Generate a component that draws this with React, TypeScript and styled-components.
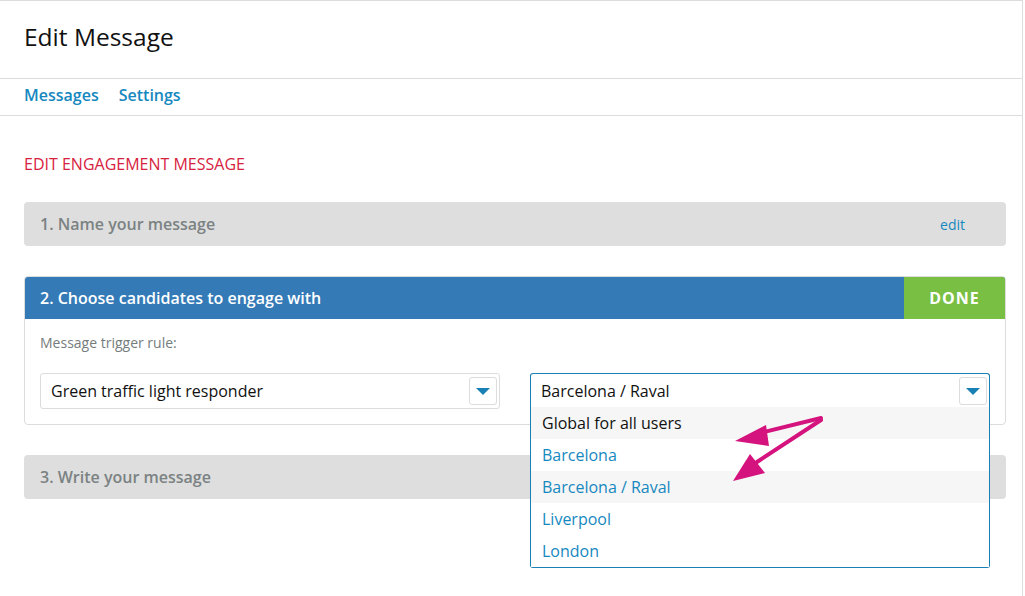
import React from 'react'
import styled, { createGlobalStyle } from 'styled-components'

const GlobalStyle = createGlobalStyle`
  * { box-sizing: border-box; }
  body { margin: 0; font-family: "Open Sans", "Noto Sans", Arial, sans-serif; background: #fff; color: #111; }
`

const Page = styled.div`
  position: relative;
  width: 1023px;
  min-height: 596px;
  border-top: 1px solid #dcdcdc;
  border-right: 1px solid #dcdcdc;
`

const Header = styled.header`
  height: 78px;
  display: flex;
  align-items: center;
  padding: 0 24px;
  border-bottom: 1px solid #dcdcdc;
`

const Title = styled.h1`
  margin: 0 0 7px;
  font-size: 24.5px;
  font-weight: 500;
  color: #111;
`

const Nav = styled.nav`
  height: 37px;
  display: flex;
  align-items: center;
  gap: 20px;
  padding: 0 24px 4px;
  border-bottom: 1px solid #dcdcdc;
`

const NavLink = styled.a`
  font-size: 16px;
  font-weight: 600;
  color: #1688c0;
  text-decoration: none;
`

const Content = styled.main`
  padding: 37px 16px 0 24px;
`

const SectionTitle = styled.h2`
  margin: 0 0 27px;
  font-size: 16px;
  font-weight: 400;
  color: #d7223e;
  line-height: 22px;
`

const Collapsed = styled.div`
  height: 44px;
  display: flex;
  align-items: center;
  justify-content: space-between;
  padding: 0 41px 0 16px;
  background: #dedede;
  border-radius: 4px;
  margin-bottom: 30px;
`

const StepLabel = styled.span`
  font-size: 16px;
  font-weight: 600;
  color: #7b8283;
`

const EditLink = styled.a`
  font-size: 14px;
  color: #1688c0;
  text-decoration: none;
`

const Panel = styled.section`
  border: 1px solid #dcdcdc;
  border-radius: 4px;
  margin-bottom: 30px;
`

const PanelHead = styled.div`
  height: 42px;
  display: flex;
  align-items: stretch;
  background: #337ab7;
  border-radius: 3px 3px 0 0;
`

const PanelTitle = styled.div`
  flex: 1;
  display: flex;
  align-items: center;
  padding-left: 15px;
  font-size: 16px;
  font-weight: 600;
  color: #fff;
`

const DoneButton = styled.button`
  width: 101px;
  border: 0;
  background: #78bf43;
  color: #fff;
  font-family: inherit;
  font-size: 16px;
  font-weight: 700;
  letter-spacing: 1px;
  border-radius: 0 3px 0 0;
`

const PanelBody = styled.div`
  padding: 14px 15px 15px;
`

const FieldLabel = styled.div`
  font-size: 14px;
  color: #757c7d;
  margin-bottom: 20px;
  line-height: 20px;
`

const SelectRow = styled.div`
  display: grid;
  grid-template-columns: 1fr 1fr;
  gap: 30px;
`

const SelectWrap = styled.div`
  position: relative;
`

const SelectBox = styled.div<{ $open?: boolean }>`
  height: 36px;
  display: flex;
  align-items: center;
  justify-content: space-between;
  padding: 0 2px 0 10px;
  border: 1px solid ${(p) => (p.$open ? '#1a7fb2' : '#dcdcdc')};
  border-radius: ${(p) => (p.$open ? '3px 3px 0 0' : '3px')};
  border-bottom-color: ${(p) => (p.$open ? 'transparent' : '#dcdcdc')};
  font-size: 16px;
  color: #111;
  background: #fff;
`

const ArrowBtn = styled.span`
  width: 28px;
  height: 28px;
  display: flex;
  align-items: center;
  justify-content: center;
  border: 1px solid #dcdcdc;
  border-radius: 3px;
`

const Triangle = styled.span`
  width: 0;
  height: 0;
  border-left: 7px solid transparent;
  border-right: 7px solid transparent;
  border-top: 7px solid #1980b5;
`

const OptionList = styled.ul`
  position: absolute;
  top: 34px;
  left: 0;
  right: 0;
  margin: 0;
  padding: 0;
  list-style: none;
  background: #fff;
  border: 1px solid #1a7fb2;
  border-top: 0;
  border-radius: 0 0 3px 3px;
  z-index: 2;
`

const Option = styled.li<{ $shade?: boolean; $plain?: boolean }>`
  height: 32px;
  display: flex;
  align-items: center;
  padding-left: 11px;
  font-size: 16px;
  background: ${(p) => (p.$shade ? '#f6f6f6' : '#fff')};
  color: ${(p) => (p.$plain ? '#111' : '#1688c0')};
`

const Annotation = styled.svg`
  position: absolute;
  left: 0;
  top: 0;
  z-index: 3;
  pointer-events: none;
`

const options = ['Global for all users', 'Barcelona', 'Barcelona / Raval', 'Liverpool', 'London']

const Select: React.FC<{ value: string; open?: boolean }> = ({ value, open }) => (
  <SelectWrap>
    <SelectBox $open={open}>
      <span>{value}</span>
      <ArrowBtn>
        <Triangle />
      </ArrowBtn>
    </SelectBox>
    {open && (
      <OptionList>
        {options.map((o, i) => (
          <Option key={o} $shade={i % 2 === 0 && i < 4} $plain={i === 0}>
            {o}
          </Option>
        ))}
      </OptionList>
    )}
  </SelectWrap>
)

const App: React.FC = () => {
  return (
    <>
      <GlobalStyle />
      <Page>
        <Header>
          <Title>Edit Message</Title>
        </Header>
        <Nav>
          <NavLink href="#">Messages</NavLink>
          <NavLink href="#">Settings</NavLink>
        </Nav>
        <Content>
          <SectionTitle>EDIT ENGAGEMENT MESSAGE</SectionTitle>
          <Collapsed>
            <StepLabel>1. Name your message</StepLabel>
            <EditLink href="#">edit</EditLink>
          </Collapsed>
          <Panel>
            <PanelHead>
              <PanelTitle>2. Choose candidates to engage with</PanelTitle>
              <DoneButton>DONE</DoneButton>
            </PanelHead>
            <PanelBody>
              <FieldLabel>Message trigger rule:</FieldLabel>
              <SelectRow>
                <Select value="Green traffic light responder" />
                <Select value="Barcelona / Raval" open />
              </SelectRow>
            </PanelBody>
          </Panel>
          <Collapsed>
            <StepLabel>3. Write your message</StepLabel>
          </Collapsed>
        </Content>
        <Annotation width="1023" height="596" viewBox="0 0 1023 596">
          <g fill="none" stroke="#d4137e" strokeWidth="4" strokeLinecap="round" strokeLinejoin="round">
            <path d="M821 417 L760 432" />
            <path d="M821 419 L757 461" />
          </g>
          <g fill="#d4137e">
            <path d="M735 440 L766 424 L769 445 Z" />
            <path d="M733 480 L750 453 L765 472 Z" />
          </g>
        </Annotation>
      </Page>
    </>
  )
}

export default App
